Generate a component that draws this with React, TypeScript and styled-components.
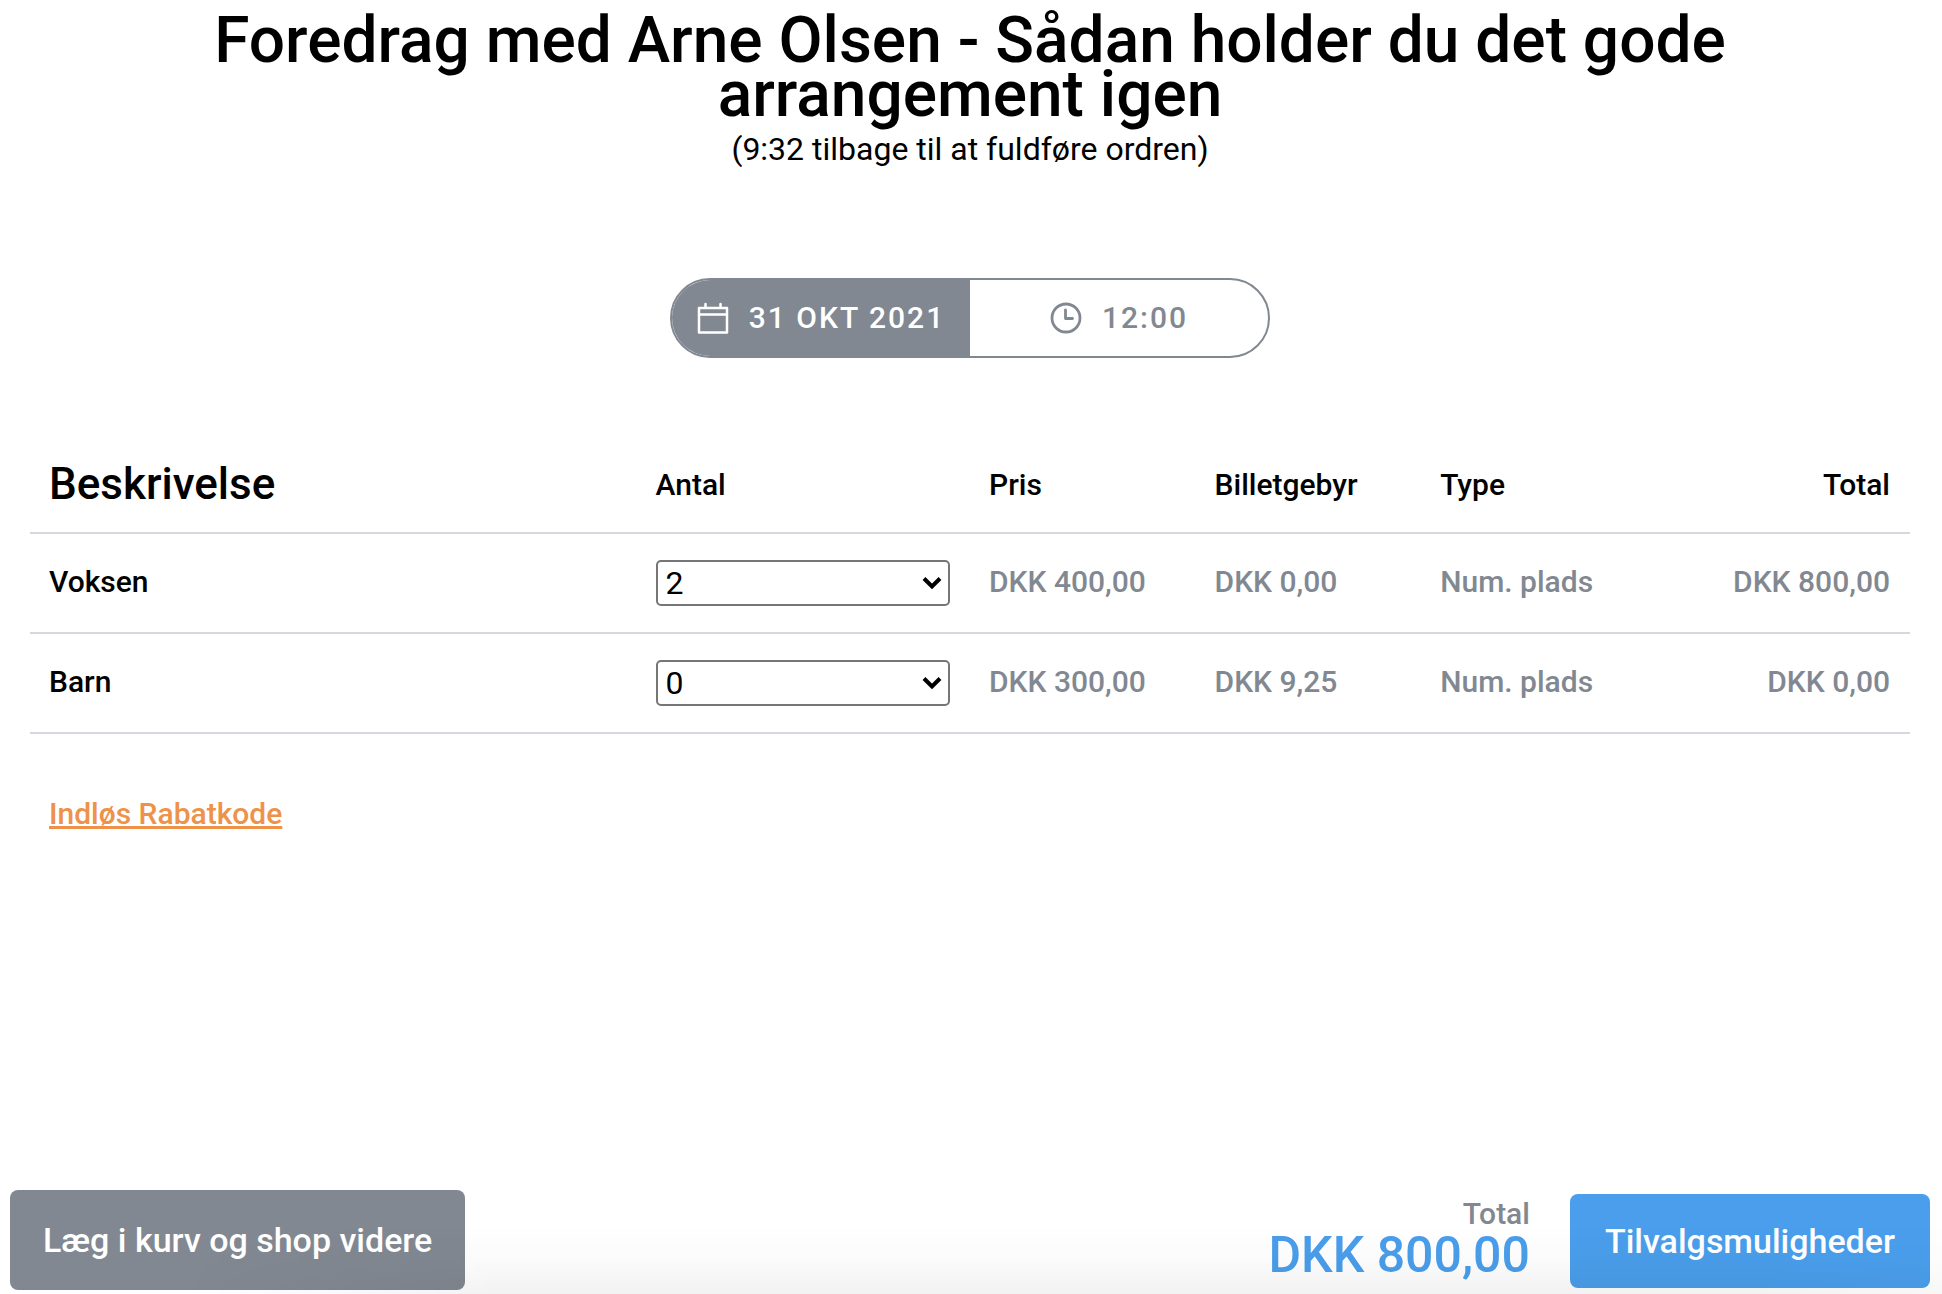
import React, { useState } from "react";
import styled, { createGlobalStyle } from "styled-components";

const color = {
  text: "#000000",
  muted: "#828891",
  line: "#d5d9dd",
  accent: "#4a9eeb",
  link: "#ee924a",
};

const GlobalStyle = createGlobalStyle`
  *, *::before, *::after { box-sizing: border-box; }
  body {
    margin: 0;
    background: #ffffff;
    color: ${color.text};
    font-family: Roboto, "Liberation Sans", sans-serif;
    font-size: 30px;
    font-weight: 500;
  }
`;

const Page = styled.div`
  display: flex;
  flex-direction: column;
  min-height: 100vh;
  padding-right: 2px;
`;

const Header = styled.header`
  display: flex;
  flex-direction: column;
  align-items: center;
  padding: 14px 200px 0;
  text-align: center;
`;

const Title = styled.h1`
  margin: 0;
  font-size: 64px;
  font-weight: 500;
  line-height: 54px;
`;

const Countdown = styled.p`
  margin: 6px 0 0;
  font-size: 32px;
  font-weight: 400;
  line-height: 42px;
`;

const Slot = styled.div`
  display: flex;
  width: 600px;
  height: 80px;
  margin: 108px auto 0;
  border: 2px solid ${color.muted};
  border-radius: 40px;
  overflow: hidden;
`;

const SlotPart = styled.div<{ $filled?: boolean }>`
  flex: 1;
  display: flex;
  align-items: center;
  justify-content: center;
  gap: 20px;
  background: ${(p) => (p.$filled ? color.muted : "transparent")};
  color: ${(p) => (p.$filled ? "#ffffff" : color.muted)};
  letter-spacing: 2px;
`;

const SlotText = styled.span`
  padding-bottom: 2px;
`;

const Main = styled.main`
  flex: 1;
  padding: 75px 30px 40px;
`;

const Table = styled.table`
  width: 100%;
  table-layout: fixed;
  border-collapse: collapse;
`;

const Col = styled.col<{ $share: number }>`
  width: ${(p) => p.$share}%;
`;

const Row = styled.tr`
  height: 100px;
  border-bottom: 2px solid ${color.line};
`;

const HeadCell = styled.th<{ $large?: boolean; $end?: boolean; $inset?: boolean }>`
  padding: 3px 20px 0 ${(p) => (p.$inset ? 24 : 19)}px;
  font-size: ${(p) => (p.$large ? 44 : 30)}px;
  font-weight: 500;
  text-align: ${(p) => (p.$end ? "right" : "left")};
`;

const NameCell = styled.th`
  padding: 0 20px 4px 19px;
  font-weight: 500;
  text-align: left;
`;

const Cell = styled.td<{ $end?: boolean }>`
  padding: 0 20px 4px 19px;
  color: ${color.muted};
  text-align: ${(p) => (p.$end ? "right" : "left")};
`;

const CountCell = styled.td`
  padding: 0 20px 0 24px;
`;

const SelectBox = styled.div`
  display: grid;
  align-items: center;
  & > * { grid-area: 1 / 1; }
  & > svg { justify-self: end; margin-right: 8px; pointer-events: none; }
`;

const Select = styled.select`
  appearance: none;
  width: 100%;
  height: 46px;
  padding: 0 40px 0 8px;
  border: 2px solid #767676;
  border-radius: 5px;
  background: #ffffff;
  color: ${color.text};
  font-family: inherit;
  font-size: 32px;
  font-weight: 400;
`;

const DiscountLink = styled.a`
  display: inline-block;
  margin: 62px 19px 0;
  color: ${color.link};
  line-height: 36px;
  text-decoration: underline;
`;

const Footer = styled.footer`
  position: relative;
  display: flex;
  align-items: center;
  justify-content: space-between;
  margin-right: -2px;
  padding: 0 12px 4px 10px;

  &::after {
    content: "";
    position: absolute;
    inset: auto 0 0 0;
    height: 70px;
    pointer-events: none;
    background: linear-gradient(to top, rgba(0, 0, 0, 0.05), rgba(0, 0, 0, 0.015) 50%, transparent);
    mask-image: linear-gradient(to right, transparent 180px, #000000 500px, #000000 90%, rgba(0, 0, 0, 0.6));
  }
`;

const Checkout = styled.div`
  display: flex;
  align-items: center;
  gap: 40px;
  padding-top: 2px;
`;

const Sum = styled.div`
  display: flex;
  flex-direction: column;
  align-items: flex-end;
  padding-bottom: 6px;
`;

const SumLabel = styled.span`
  color: ${color.muted};
  line-height: 34px;
`;

const SumValue = styled.span`
  color: ${color.accent};
  font-size: 50px;
  line-height: 48px;
`;

const Button = styled.button<{ $primary?: boolean }>`
  height: ${(p) => (p.$primary ? 94 : 100)}px;
  padding: 0 ${(p) => (p.$primary ? 35 : 33)}px;
  border: 0;
  border-radius: 8px;
  background: ${(p) => (p.$primary ? color.accent : color.muted)};
  color: #ffffff;
  font-family: inherit;
  font-size: 34px;
  font-weight: 500;
  cursor: pointer;
`;

const CalendarIcon = () => (
  <svg width="32" height="32" viewBox="0 0 32 32" fill="none" stroke="currentColor" strokeWidth="2.5" strokeLinejoin="round" strokeLinecap="round" aria-hidden="true">
    <path d="M2 6h28v24.500H2zM2 12.500h28M8.500 2v3.500M23.500 2v3.500" />
  </svg>
);

const ClockIcon = () => (
  <svg width="32" height="32" viewBox="0 0 32 32" fill="none" stroke="currentColor" strokeWidth="2.8" strokeLinejoin="round" strokeLinecap="round" aria-hidden="true">
    <circle cx="16" cy="16" r="14" />
    <path d="M15.500 8v8.500h7" />
  </svg>
);

const Chevron = () => (
  <svg width="20" height="14" viewBox="0 0 20 14" fill="none" stroke="#000000" strokeWidth="4" aria-hidden="true">
    <path d="M2 2.500l8 8 8-8" />
  </svg>
);

interface Ticket {
  name: string;
  price: number;
  fee: number;
  initial: number;
}

const tickets: Ticket[] = [
  { name: "Voksen", price: 400, fee: 0, initial: 2 },
  { name: "Barn", price: 300, fee: 9.25, initial: 0 },
];

const dkk = (value: number) => `DKK ${value.toFixed(2).replace(".", ",")}`;

export default function App() {
  const [counts, setCounts] = useState(tickets.map((t) => t.initial));
  const totals = tickets.map((t, i) => (t.price + t.fee) * counts[i]);
  const sum = totals.reduce((a, b) => a + b, 0);

  return (
    <Page>
      <GlobalStyle />
      <Header>
        <Title>Foredrag med Arne Olsen - Sådan holder du det gode arrangement igen</Title>
        <Countdown>(9:32 tilbage til at fuldføre ordren)</Countdown>
      </Header>
      <Slot>
        <SlotPart $filled><CalendarIcon /><SlotText>31 OKT 2021</SlotText></SlotPart>
        <SlotPart><ClockIcon /><SlotText>12:00</SlotText></SlotPart>
      </Slot>
      <Main>
        <Table>
          <colgroup>
            {[32, 18, 12, 12, 12, 14].map((share, i) => <Col key={i} $share={share} />)}
          </colgroup>
          <thead>
            <Row>
              <HeadCell scope="col" $large>Beskrivelse</HeadCell>
              <HeadCell scope="col" $inset>Antal</HeadCell>
              <HeadCell scope="col">Pris</HeadCell>
              <HeadCell scope="col">Billetgebyr</HeadCell>
              <HeadCell scope="col">Type</HeadCell>
              <HeadCell scope="col" $end>Total</HeadCell>
            </Row>
          </thead>
          <tbody>
            {tickets.map((t, i) => (
              <Row key={t.name}>
                <NameCell scope="row"><label htmlFor={`count-${i}`}>{t.name}</label></NameCell>
                <CountCell>
                  <SelectBox>
                    <Select
                      id={`count-${i}`}
                      value={counts[i]}
                      onChange={(e) => setCounts(counts.map((c, j) => (j === i ? Number(e.target.value) : c)))}
                    >
                      {Array.from({ length: 11 }, (_, n) => <option key={n} value={n}>{n}</option>)}
                    </Select>
                    <Chevron />
                  </SelectBox>
                </CountCell>
                <Cell>{dkk(t.price)}</Cell>
                <Cell>{dkk(t.fee)}</Cell>
                <Cell>Num. plads</Cell>
                <Cell $end>{dkk(totals[i])}</Cell>
              </Row>
            ))}
          </tbody>
        </Table>
        <DiscountLink href="#rabatkode">Indløs Rabatkode</DiscountLink>
      </Main>
      <Footer>
        <Button type="button">Læg i kurv og shop videre</Button>
        <Checkout>
          <Sum>
            <SumLabel>Total</SumLabel>
            <SumValue>{dkk(sum)}</SumValue>
          </Sum>
          <Button type="button" $primary>Tilvalgsmuligheder</Button>
        </Checkout>
      </Footer>
    </Page>
  );
}
